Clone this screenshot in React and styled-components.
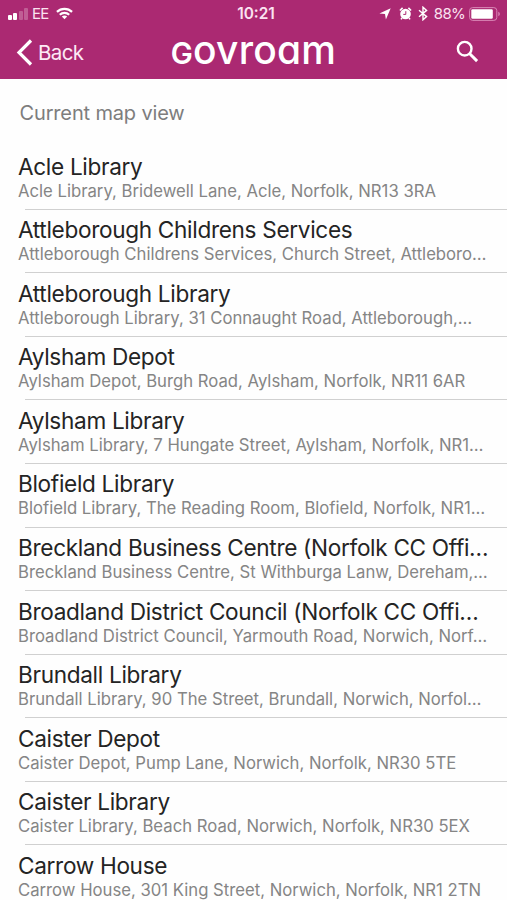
import React from 'react';
import styled, { createGlobalStyle } from 'styled-components';

const GlobalStyle = createGlobalStyle`
  * {
    box-sizing: border-box;
  }

  body {
    margin: 0;
    background: #fefefe;
    font-family: Inter, Roboto, 'Liberation Sans', sans-serif;
    overflow: hidden;
  }
`;

const Screen = styled.main`
  width: 507px;
  height: 900px;
  overflow: hidden;
  background: #fefefe;
`;

const Header = styled.header`
  height: 79px;
  background: #ab2972;
  color: #fff;
`;

const StatusBar = styled.div`
  display: grid;
  grid-template-columns: 1fr auto 1fr;
  align-items: center;
  height: 27px;
  padding: 0 6px 0 8px;
  color: #fbe3f1;
`;

const StatusGroup = styled.div`
  display: flex;
  align-items: center;
  justify-content: ${({ $end }) => ($end ? 'flex-end' : 'flex-start')};
`;

const Signal = styled.div`
  display: flex;
  align-items: flex-end;
  gap: 1.3px;
  width: 21px;
  height: 12px;
  margin-right: 3px;
`;

const SignalBar = styled.span`
  width: 4.1px;
  height: ${({ $height }) => $height}px;
  border-radius: 1px;
  background: #fff;
  opacity: ${({ $dim }) => ($dim ? 0.25 : 1)};
`;

const StatusText = styled.span`
  font-size: 15px;
  line-height: 18px;
  letter-spacing: ${({ $spacing }) => $spacing || '0'};
  margin-right: ${({ $gap }) => $gap || 0}px;
`;

const Clock = styled.time`
  padding-left: 3px;
  font-size: 15.4px;
  font-weight: 600;
  line-height: 18px;
`;

const StatusIcon = styled.svg`
  display: block;
  flex: none;
  margin-right: ${({ $gap }) => $gap || 0}px;
`;

const NavBar = styled.nav`
  display: grid;
  grid-template-columns: 1fr auto 1fr;
  align-items: center;
  height: 50px;
  padding: 0 28px 0 16px;
`;

const BackButton = styled.button`
  display: flex;
  align-items: center;
  gap: 5px;
  padding: 1px 0 0;
  border: 0;
  background: none;
  color: #fde9f5;
  font: inherit;
  font-size: 20.5px;
  line-height: 26px;
  letter-spacing: -0.6px;
`;

const Brand = styled.h1`
  margin: 0 0 2px 12px;
  font-size: 39px;
  font-weight: 500;
  line-height: 40px;
  letter-spacing: 0.2px;
  font-feature-settings: 'cv11' 1;
`;

const BrandInitial = styled.span`
  font-size: 29.5px;
  font-weight: 600;
`;

const SearchButton = styled.button`
  justify-self: end;
  padding: 2px 0 0;
  border: 0;
  background: none;
  color: #fff;
`;

const SectionTitle = styled.h2`
  margin: 0;
  padding: 21px 19.5px 0;
  height: 67.3px;
  color: #7d7d7d;
  font-size: 20px;
  font-weight: 400;
  line-height: 26px;
  letter-spacing: -0.15px;
`;

const List = styled.ul`
  margin: 0;
  padding: 0;
  list-style: none;
`;

const Row = styled.li`
  display: flex;
  flex-direction: column;
  height: 63.55px;
  padding: 6.4px 0 0 18px;
  white-space: nowrap;

  &::after {
    content: '';
    flex: none;
    height: 1px;
    margin: auto 0 0 7px;
    background: #d0d0d0;
  }
`;

const Name = styled.span`
  color: #242424;
  font-size: 22.6px;
  line-height: 28px;
  letter-spacing: -0.32px;
`;

const Address = styled.span`
  color: #858585;
  font-size: 16.7px;
  line-height: 21px;
  letter-spacing: 0;
`;

const places = [
  ['Acle Library', 'Acle Library, Bridewell Lane, Acle, Norfolk, NR13 3RA'],
  ['Attleborough Childrens Services', 'Attleborough Childrens Services, Church Street, Attleboro…'],
  ['Attleborough Library', 'Attleborough Library, 31 Connaught Road, Attleborough,…'],
  ['Aylsham Depot', 'Aylsham Depot, Burgh Road, Aylsham, Norfolk, NR11 6AR'],
  ['Aylsham Library', 'Aylsham Library, 7 Hungate Street, Aylsham, Norfolk, NR1…'],
  ['Blofield Library', 'Blofield Library, The Reading Room, Blofield, Norfolk, NR1…'],
  ['Breckland Business Centre (Norfolk CC Offi…', 'Breckland Business Centre, St Withburga Lanw, Dereham,…'],
  ['Broadland District Council (Norfolk CC Offi…', 'Broadland District Council, Yarmouth Road, Norwich, Norf…'],
  ['Brundall Library', 'Brundall Library, 90 The Street, Brundall, Norwich, Norfol…'],
  ['Caister Depot', 'Caister Depot, Pump Lane, Norwich, Norfolk, NR30 5TE'],
  ['Caister Library', 'Caister Library, Beach Road, Norwich, Norfolk, NR30 5EX'],
  ['Carrow House', 'Carrow House, 301 King Street, Norwich, Norfolk, NR1 2TN'],
];

const WifiIcon = () => (
  <StatusIcon width="17" height="13" viewBox="0 0 18 13" fill="none" stroke="#fff" strokeWidth="2.3">
    <path d="M1 4.8C5.4.5 12.6.5 17 4.8" />
    <path d="M4 7.9c2.8-2.7 7.2-2.7 10 0" />
    <path d="M6.2 9.8c1.6-1.5 4-1.5 5.6 0L9 12.6z" fill="#fff" stroke="none" />
  </StatusIcon>
);

const LocationIcon = () => (
  <StatusIcon $gap={8} width="12" height="12" viewBox="0 0 12 12" fill="#fff">
    <path d="M11.7.3 6.9 11.5 6 6.1.4 5.4z" />
  </StatusIcon>
);

const AlarmIcon = () => (
  <StatusIcon $gap={6} width="13" height="13" viewBox="0 0 13 13">
    <circle cx="6.5" cy="7" r="5.3" fill="#fff" />
    <path d="M.9 3.5 3.6.9M12.1 3.5 9.4.9M3 11l-1 1.4M10 11l1 1.4" stroke="#fff" strokeWidth="1.6" />
    <path d="M6.8 4.2v3.2H4.3" fill="none" stroke="#ab2972" strokeWidth="1" />
  </StatusIcon>
);

const BluetoothIcon = () => (
  <StatusIcon $gap={6} width="10" height="15" viewBox="0 0 10 15" fill="none" stroke="#fff" strokeWidth="1.4">
    <path d="m1 4.2 7.6 6.4L5 13.8V1.2l3.6 3.2L1 10.8" />
  </StatusIcon>
);

const BatteryIcon = () => (
  <StatusIcon width="32" height="14" viewBox="0 0 32 14">
    <rect x=".6" y=".6" width="27.2" height="12.8" rx="3" fill="none" stroke="#d987b6" strokeWidth="1" />
    <rect x="2.3" y="2.2" width="21.5" height="9.6" rx="1.2" fill="#fff" />
    <path d="M29.3 4.8c2 .7 2 3.7 0 4.4z" fill="#d987b6" />
  </StatusIcon>
);

const App = () => (
  <>
    <GlobalStyle />
    <Screen>
      <Header>
        <StatusBar>
          <StatusGroup>
            <Signal>
              <SignalBar $height={5} />
              <SignalBar $height={7} />
              <SignalBar $height={9} $dim />
              <SignalBar $height={12} $dim />
            </Signal>
            <StatusText $spacing="-0.8px" $gap={8}>EE</StatusText>
            <WifiIcon />
          </StatusGroup>
          <Clock>10:21</Clock>
          <StatusGroup $end>
            <LocationIcon />
            <AlarmIcon />
            <BluetoothIcon />
            <StatusText $spacing="-0.7px" $gap={4}>88%</StatusText>
            <BatteryIcon />
          </StatusGroup>
        </StatusBar>

        <NavBar>
          <BackButton type="button">
            <svg width="17" height="27" viewBox="0 0 17 27" fill="none" stroke="#fff" strokeWidth="3.2">
              <path d="M15 1.5 3 13.5l12 12" />
            </svg>
            Back
          </BackButton>
          <Brand>
            <BrandInitial>G</BrandInitial>ovroam
          </Brand>
          <SearchButton type="button" aria-label="Search">
            <svg width="23" height="23" viewBox="0 0 23 23" fill="none" stroke="#fff">
              <circle cx="8.7" cy="8.7" r="6.8" strokeWidth="2.4" />
              <path d="m13.5 13.5 7.6 7.6" strokeWidth="3" />
            </svg>
          </SearchButton>
        </NavBar>
      </Header>

      <SectionTitle>Current map view</SectionTitle>
      <List>
        {places.map(([name, address]) => (
          <Row key={name}>
            <Name>{name}</Name>
            <Address>{address}</Address>
          </Row>
        ))}
      </List>
    </Screen>
  </>
);

export default App;
